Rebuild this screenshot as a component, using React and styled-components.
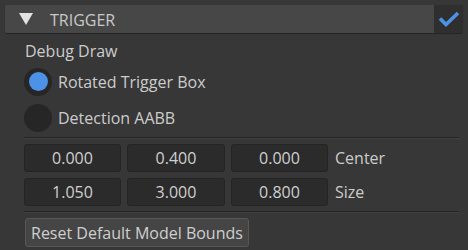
import React, { useState } from 'react';
import styled, { createGlobalStyle } from 'styled-components';

const GlobalStyle = createGlobalStyle`
  html, body {
    margin: 0;
    padding: 0;
    background: #373737;
  }
  body {
    font-family: "Open Sans", "Noto Sans", sans-serif;
    color: #cccccc;
  }
`;

const Panel = styled.div`
  width: 468px;
  height: 250px;
  box-sizing: border-box;
  padding: 5px 5px 0 5px;
  background: #373737;
`;

const Header = styled.div`
  display: flex;
  height: 28px;
  border-radius: 2px;
  overflow: hidden;
  box-shadow: 0 1px 1px rgba(0, 0, 0, 0.35);
`;

const HeaderBar = styled.div`
  flex: 1;
  display: flex;
  align-items: center;
  background: #474747;
  padding: 1px 0 0 14px;
  gap: 17px;
  font-size: 16px;
  color: #c9c9c9;

  svg {
    margin-top: -1px;
  }
`;

const Toggle = styled.div`
  width: 29px;
  display: flex;
  align-items: center;
  justify-content: center;
  background: #2f2f2f;
`;

const Body = styled.div`
  display: flex;
  flex-direction: column;
  padding: 0 4px 0 19px;
  font-size: 16px;
`;

const Caption = styled.div`
  height: 34px;
  display: flex;
  align-items: center;
  padding: 2px 0 0 1px;
  box-sizing: border-box;
`;

const Radios = styled.div`
  display: flex;
  flex-direction: column;
  gap: 7px;
`;

const RadioRow = styled.label`
  display: flex;
  align-items: center;
  gap: 6px;
  height: 29px;
  cursor: pointer;
`;

const RadioDot = styled.span`
  width: 28px;
  height: 28px;
  border-radius: 50%;
  background: #262626;
  display: flex;
  align-items: center;
  justify-content: center;

  &::after {
    content: '';
    width: 19px;
    height: 19px;
    border-radius: 50%;
    background: ${(p) => (p.$on ? '#4c92e6' : 'transparent')};
  }
`;

const Divider = styled.div`
  height: 1px;
  background: #252525;
  border-bottom: 1px solid #404040;
  margin: ${(p) => p.$m};
`;

const Grid = styled.div`
  display: grid;
  grid-template-columns: 97px 98px 97px auto;
  column-gap: 6px;
  row-gap: 6px;
  align-items: center;
`;

const Field = styled.div`
  height: 28px;
  box-sizing: border-box;
  border-radius: 3px;
  background: #2b2b2b;
  border: 1px solid #242424;
  display: flex;
  align-items: center;
  justify-content: center;
  color: #cfcfcf;
`;

const FieldLabel = styled.div`
  padding-left: 1px;
`;

const Button = styled.button`
  align-self: flex-start;
  height: 29px;
  padding: 0 5px;
  margin-left: 1px;
  border-radius: 3px;
  border: 1px solid #575757;
  background: #454545;
  color: #cfcfcf;
  font-family: inherit;
  font-size: 16px;
`;

function Triangle() {
  return (
    <svg width="14" height="12" viewBox="0 0 14 12">
      <path d="M0 0 H14 L7 12 Z" fill="#e2e2e2" />
    </svg>
  );
}

function Check() {
  return (
    <svg width="22" height="16" viewBox="0 0 22 16">
      <path d="M2 7.5 L8 13.5 L20 2" fill="none" stroke="#4c92e6" strokeWidth="3.6" />
    </svg>
  );
}

const rows = [
  { values: ['0.000', '0.400', '0.000'], label: 'Center' },
  { values: ['1.050', '3.000', '0.800'], label: 'Size' },
];

export default function App() {
  const [mode, setMode] = useState(0);
  return (
    <Panel>
      <GlobalStyle />
      <Header>
        <HeaderBar>
          <Triangle />
          TRIGGER
        </HeaderBar>
        <Toggle>
          <Check />
        </Toggle>
      </Header>
      <Body>
        <Caption>Debug Draw</Caption>
        <Radios>
          {['Rotated Trigger Box', 'Detection AABB'].map((t, i) => (
            <RadioRow key={t} onClick={() => setMode(i)}>
              <RadioDot $on={mode === i} />
              {t}
            </RadioRow>
          ))}
        </Radios>
        <Divider $m="5px 0 5px 0" />
        <Grid>
          {rows.map((r) => (
            <React.Fragment key={r.label}>
              {r.values.map((v, i) => (
                <Field key={i}>{v}</Field>
              ))}
              <FieldLabel>{r.label}</FieldLabel>
            </React.Fragment>
          ))}
        </Grid>
        <Divider $m="5px 0 5px 0" />
        <Button type="button">Reset Default Model Bounds</Button>
      </Body>
    </Panel>
  );
}
